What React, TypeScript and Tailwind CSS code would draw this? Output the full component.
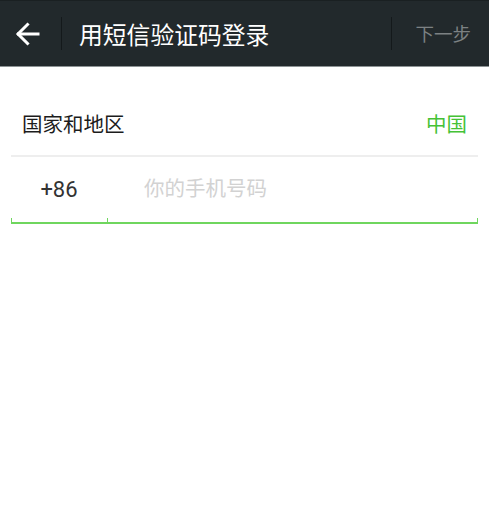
const cjk = "font-['Noto_Sans_CJK_SC',sans-serif]"

function BackArrow() {
  return (
    <svg width="25" height="24" viewBox="0 0 25 24" fill="none" stroke="currentColor" strokeWidth="3" strokeLinecap="square">
      <path d="M23 12H3.5" />
      <path d="M12.5 2.5 3 12l9.5 9.5" />
    </svg>
  )
}

export default function App() {
  return (
    <div className={`min-h-[515px] w-full bg-white ${cjk}`}>
      {/* top bar */}
      <header className="flex h-[67px] items-center border-t border-b border-t-[#1a2022] border-b-[#8d9395] bg-[#22292c]">
        <button className="ml-[15px] flex items-center text-white">
          <BackArrow />
        </button>
        <div className="ml-[21px] h-[33px] w-px bg-[#14191b]" />
        <h1 className="ml-[17px] flex-1 text-[23.8px] leading-none text-white">用短信验证码登录</h1>
        <div className="h-[33px] w-px bg-[#14191b]" />
        <span className="ml-[23px] mr-[18px] text-[18.5px] leading-none text-[#7c8183]">下一步</span>
      </header>

      <div className="pt-[24px]">
        {/* country */}
        <div className="mx-[11px] flex h-[66px] items-center justify-between border-b-2 border-[#eeeeee] pl-[11px] pr-[11px]">
          <span className="text-[20.5px] leading-none text-[#1c1c1c]">国家和地区</span>
          <span className="text-[20.5px] leading-none text-[#45c236]">中国</span>
        </div>

        {/* phone */}
        <div className="mx-[11px]">
          <div className="flex h-[61px] items-center">
            <span className="mt-[5px] flex w-[96px] justify-center font-['Roboto',sans-serif] text-[22px] leading-none text-[#333333]">
              +86
            </span>
            <span className="pl-[37px] text-[20.5px] leading-none text-[#d2d2d2]">你的手机号码</span>
          </div>
          <div className="flex h-[6px]">
            <div className="w-[96px] border-b-2 border-l border-[#6fd65e]" />
            <div className="flex-1 border-x border-b-2 border-[#6fd65e]" />
          </div>
        </div>
      </div>
    </div>
  )
}
